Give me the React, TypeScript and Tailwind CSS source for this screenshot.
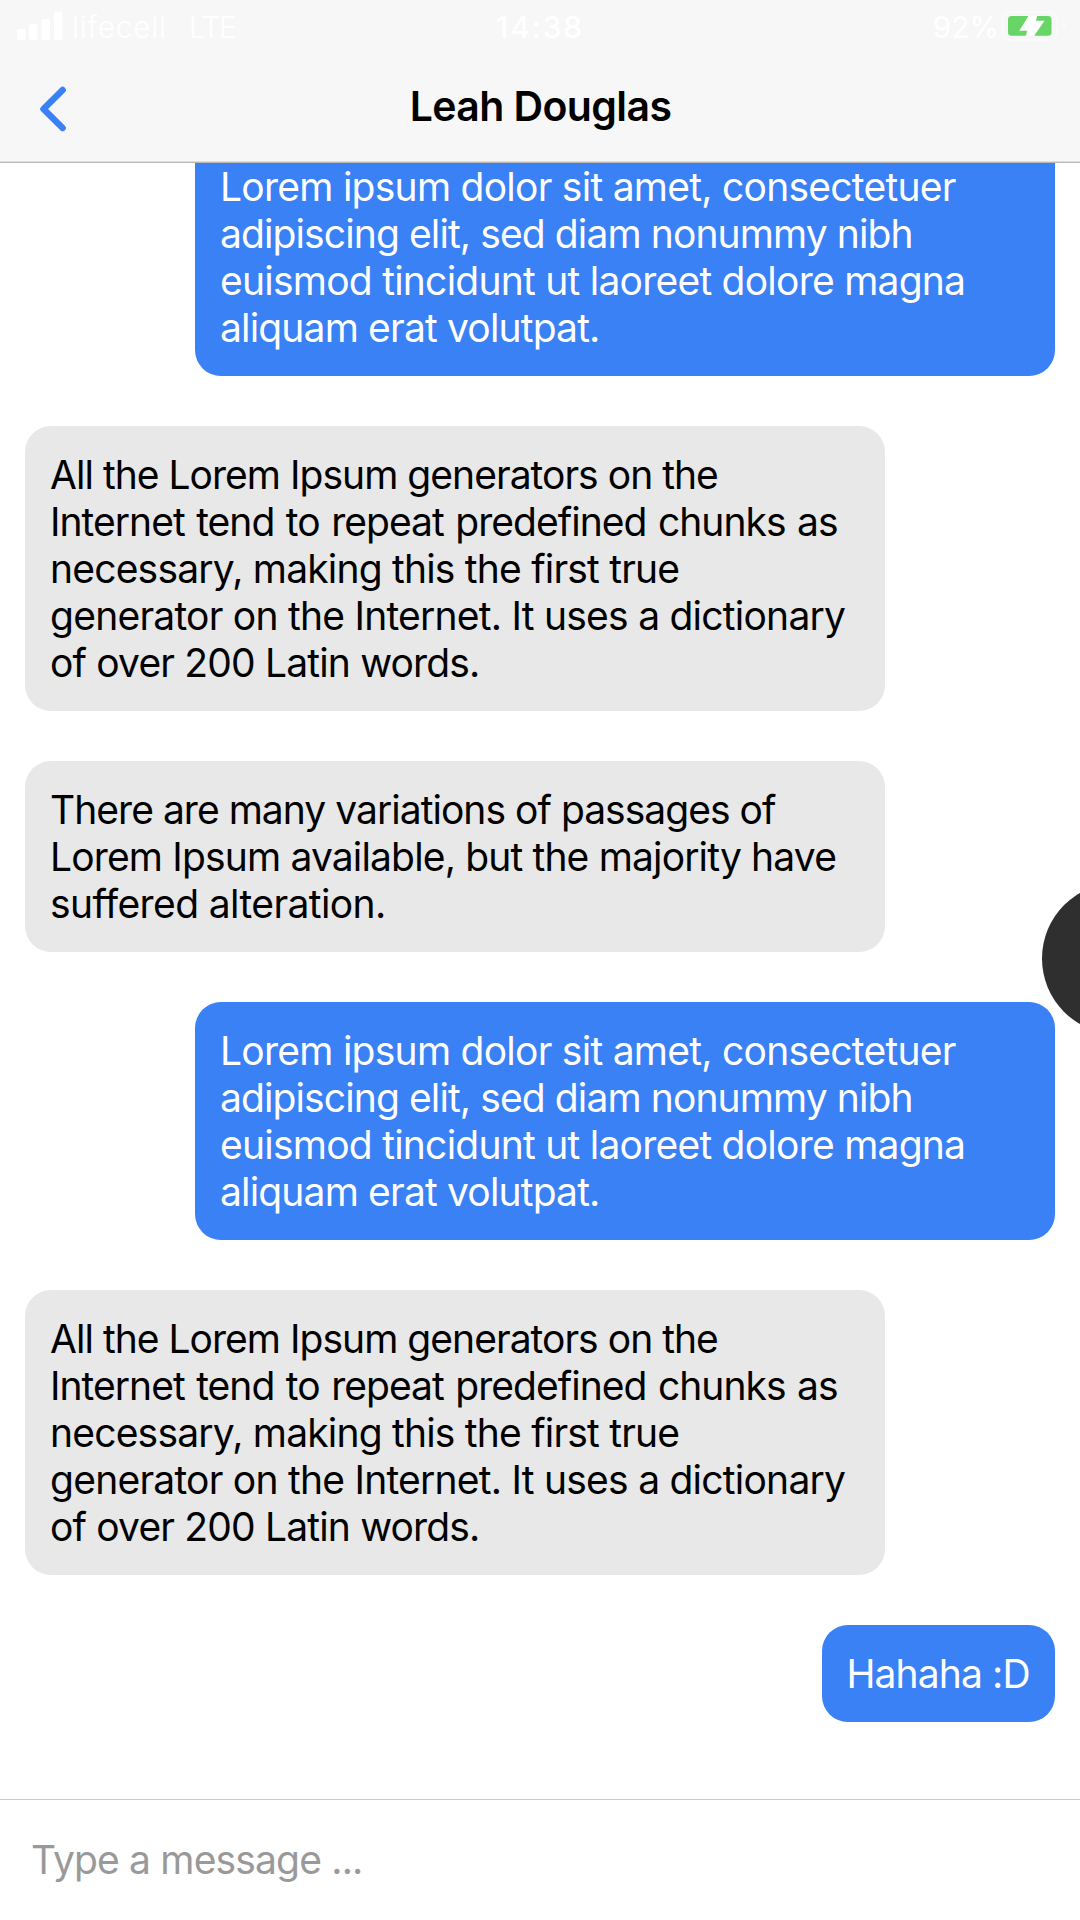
type Line = { text: string; tracking: string };
type Message = { id: number; mine: boolean; lines: Line[] };

const lorem: Line[] = [
  { text: "Lorem ipsum dolor sit amet, consectetuer", tracking: "tracking-[-0.74px]" },
  { text: "adipiscing elit, sed diam nonummy nibh", tracking: "tracking-[-0.89px]" },
  { text: "euismod tincidunt ut laoreet dolore magna", tracking: "tracking-[-0.76px]" },
  { text: "aliquam erat volutpat.", tracking: "tracking-[-0.83px]" },
];

const generators: Line[] = [
  { text: "All the Lorem Ipsum generators on the", tracking: "tracking-[-0.97px]" },
  { text: "Internet tend to repeat predefined chunks as", tracking: "tracking-[-0.97px] [word-spacing:1.5px]" },
  { text: "necessary, making this the first true", tracking: "tracking-[-0.8px]" },
  { text: "generator on the Internet. It uses a dictionary", tracking: "tracking-[-0.76px]" },
  { text: "of over 200 Latin words.", tracking: "tracking-[-0.83px]" },
];

const variations: Line[] = [
  { text: "There are many variations of passages of", tracking: "tracking-[-0.97px]" },
  { text: "Lorem Ipsum available, but the majority have", tracking: "tracking-[-0.84px]" },
  { text: "suffered alteration.", tracking: "tracking-[-0.6px]" },
];

const messages: Message[] = [
  { id: 1, mine: true, lines: lorem },
  { id: 2, mine: false, lines: generators },
  { id: 3, mine: false, lines: variations },
  { id: 4, mine: true, lines: lorem },
  { id: 5, mine: false, lines: generators },
  { id: 6, mine: true, lines: [{ text: "Hahaha :D", tracking: "tracking-[-0.88px]" }] },
];

function SignalBars() {
  return (
    <svg className="ml-[17px] h-7 w-[46px] shrink-0" viewBox="0 0 46 28" fill="#fff">
      <rect x="0" y="17" width="8.5" height="11" rx="2" />
      <rect x="12" y="12" width="8.5" height="16" rx="2" />
      <rect x="24.5" y="7" width="8.5" height="21" rx="2" />
      <rect x="37" y="0" width="8.5" height="28" rx="2" />
    </svg>
  );
}

function Battery() {
  return (
    <svg className="mr-3 h-[30px] w-[66px] shrink-0" viewBox="0 0 66 30">
      <rect x="1" y="1" width="54" height="28" rx="7" fill="none" stroke="#fafafa" strokeWidth="2" />
      <path d="M61 11.5c3 1 3 6 0 7z" fill="#fcfcfc" />
      <path d="M26 5h9.7L35 9.7h8L33 24.7h-8L26 19.7h-8z" fill="#fff" />
      <path d="M9.5 5H26.5L17.200 19.7H25.2L23.8 24.7H9.5A3.5 3.5 0 0 1 6 21.200V8.500A3.5 3.5 0 0 1 9.500 5z" fill="#67d667" />
      <path d="M35.2 5H46A3.5 3.5 0 0 1 49.5 8.5V21.2A3.5 3.5 0 0 1 46 24.7H32.2L42.500 9.7H33.9z" fill="#67d667" />
    </svg>
  );
}

function StatusBar() {
  return (
    <div className="grid h-[50px] grid-cols-3 items-center pt-[4px] text-[30px] leading-9 text-white">
      <div className="flex items-center">
        <div className="-mt-[3px]">
          <SignalBars />
        </div>
        <span className="ml-[9px] w-[117px] font-light tracking-[0.7px]">lifecell</span>
        <span className="font-light tracking-[-1.5px]">LTE</span>
      </div>
      <div className="text-center font-medium tracking-[1.8px]">14:38</div>
      <div className="flex items-center justify-end">
        <span>92%</span>
        <div className="-mt-[2px] ml-[3px]">
          <Battery />
        </div>
      </div>
    </div>
  );
}

function Header() {
  return (
    <header className="h-[163px] shrink-0 border-b border-[#b8b8b8] bg-[#f7f7f7] shadow-[inset_0_-1px_0_#dedede]">
      <StatusBar />
      <div className="grid h-[112px] grid-cols-[120px_1fr_120px] items-center">
        <button className="ml-9 flex h-14 w-10 items-center" aria-label="Back">
          <svg className="mt-1.5 h-12 w-8" viewBox="0 0 32 48" fill="none" stroke="#3981f5" strokeWidth="6.5" strokeLinecap="round" strokeLinejoin="round">
            <path d="M26.600 5 7.500 24l19.100 19" />
          </svg>
        </button>
        <h1 className="pl-px text-center text-[41px] leading-[50px] font-semibold tracking-[-0.6px] text-black">Leah Douglas</h1>
      </div>
    </header>
  );
}

function Bubble({ message }: { message: Message }) {
  return (
    <div
      className={
        message.mine
          ? "self-end rounded-[26px] bg-[#3981f5] p-[25px] text-white"
          : "w-[860px] self-start rounded-[26px] bg-[#e8e8e8] p-[25px] text-black"
      }
    >
      <p className={message.lines.length > 1 ? "w-[810px]" : "w-[183.500px]"}>
        {message.lines.map((line) => (
          <span key={line.text} className={`block whitespace-nowrap ${line.tracking}`}>
            {line.text}
          </span>
        ))}
      </p>
    </div>
  );
}

export default function App() {
  return (
    <div className="relative flex h-[1920px] w-[1080px] flex-col overflow-hidden bg-white font-['Inter',sans-serif]">
      <Header />
      <main className="flex min-h-0 flex-1 flex-col justify-end gap-[50px] overflow-hidden px-[25px] pb-[77.5px] text-[39px] leading-[47px]">
        {messages.map((message) => (
          <Bubble key={message.id} message={message} />
        ))}
      </main>
      <footer className="h-[121px] shrink-0 border-t border-[#cacaca] px-[31px] pt-[36px]">
        <input
          className="block h-[47px] w-full bg-transparent text-[39px] leading-[47px] tracking-[-0.83px] outline-none placeholder:text-[#999999]"
          placeholder="Type a message ..."
        />
      </footer>
      <div className="absolute top-[883px] left-[1042px] size-[151px] rounded-full bg-[#2f2f2f]" />
    </div>
  );
}
